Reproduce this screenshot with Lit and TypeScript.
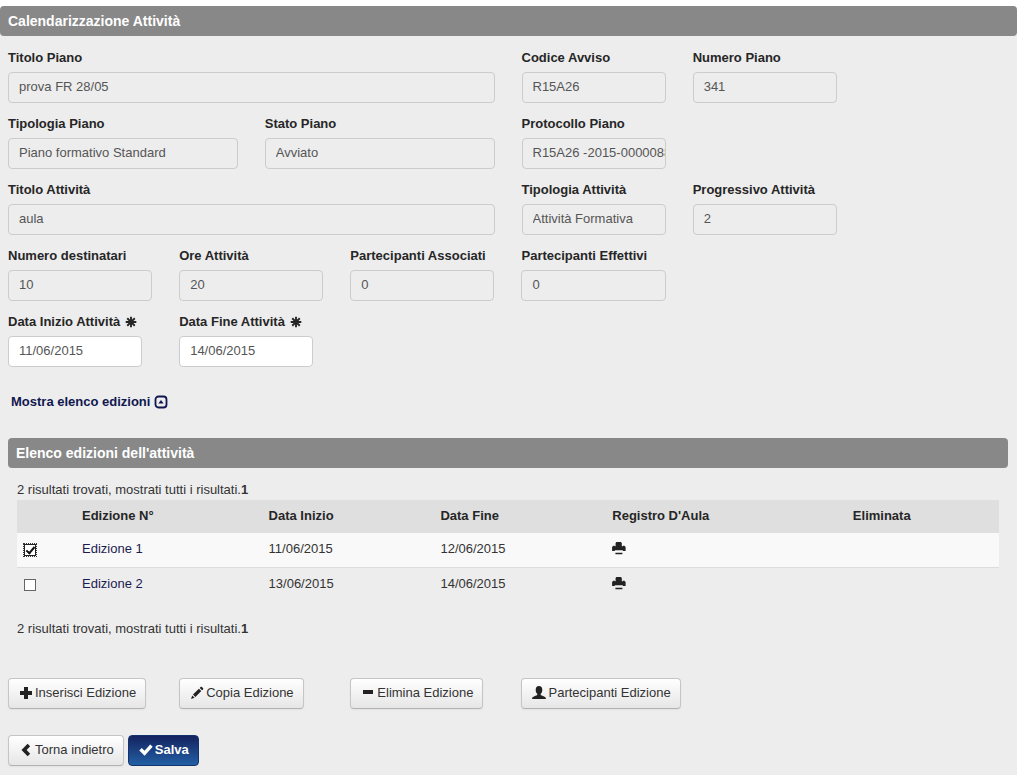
import { LitElement, html, css, svg } from "lit";
import { customElement, property, state } from "lit/decorators.js";
import { classMap } from "lit/directives/class-map.js";

const icons: Record<string, unknown> = {
  plus: svg`<path d="M5 1h4v4h4v4H9v4H5V9H1V5h4z"/>`,
  minus: svg`<path d="M2 4h10v4H2z"/>`,
  pencil: svg`<path d="M1 13l1.200-3.600 2.400 2.400zM3 8.600l5.900-5.900 2.400 2.400L5.400 11zM9.700 1.900l.9-.9c.4-.4.9-.4 1.300 0l1.100 1.100c.4.4.4.9 0 1.300l-.9.9z"/>`,
  user: svg`<path d="M7 0c2.200 0 3.300 1.600 3.300 3.900 0 1.700-.6 3-1.600 3.900v1.100c.9.9 3.900 1.300 4.700 2.300.4.500.5 1.100.5 1.800H.1c0-.7.1-1.300.5-1.800.8-1 3.800-1.400 4.700-2.300V7.800c-1-.9-1.600-2.200-1.600-3.900C3.700 1.600 4.800 0 7 0z"/>`,
  left: svg`<path d="M8.600.8l2.600 2.500L7.600 7l3.600 3.700-2.600 2.500L2.500 7z"/>`,
  ok: svg`<path d="M.3 7.600l2.500-2.500 2.700 2.600 5.700-6.300 2.500 2.400-8.100 8.900z"/>`,
  print: svg`<path d="M4.300 0h4.600l.9 1v3.300h1.100v-.6h1.500l1.200 1.300v4h-2.700V8.200H2.800V9H.1V5l1.200-1.300h1.500v.6h.8V1zM3.400 10.700h7v1.600h-7z"/>`,
  asterisk: svg`<g fill="none" stroke="currentColor" stroke-width="2.200"><path d="M7 .8v12.400M.8 7h12.400M2.600 2.600l8.800 8.800M11.400 2.600l-8.800 8.800"/></g>`,
  expand: svg`<rect x="1.500" y="1.500" width="11" height="11" rx="3" fill="none" stroke="currentColor" stroke-width="1.800"/><path d="M7 5l2.600 3.500H4.400z"/>`,
};

const icon = (name: string) =>
  html`<svg class="icon" viewBox="0 0 14 14" aria-hidden="true">${icons[name]}</svg>`;

@customElement("form-field")
class FormField extends LitElement {
  @property() label = "";
  @property() value = "";
  @property({ type: Boolean }) required = false;

  static styles = css`
    :host { display: block; min-width: 0; }
    label { display: flex; align-items: center; gap: 5px; height: 20px; margin-bottom: 4px; font-weight: bold; color: #262626; white-space: nowrap; }
    .icon { width: 12px; height: 12px; fill: currentColor; }
    input { display: block; box-sizing: border-box; width: 100%; height: 31px; padding: 0 0 2px 10px; border: 1px solid #ccc; border-radius: 4px; background: #ededed; font: inherit; color: #555; }
    .date { width: calc(100% - 10px); background: #fff; }
    input:focus { outline: none; border-color: #6ea5d8; }
  `;

  render() {
    return html`
      <label for="field">${this.label}${this.required ? icon("asterisk") : ""}</label>
      <input id="field" type="text" class=${classMap({ date: this.required })}
        .value=${this.value} ?readonly=${!this.required} ?required=${this.required}>
    `;
  }
}

interface Field { label: string; value: string; span: string; required?: boolean; }

const fieldRows: Field[][] = [
  [
    { label: "Titolo Piano", value: "prova FR 28/05", span: "span6" },
    { label: "Codice Avviso", value: "R15A26", span: "span2" },
    { label: "Numero Piano", value: "341", span: "span2" },
  ],
  [
    { label: "Tipologia Piano", value: "Piano formativo Standard", span: "span3" },
    { label: "Stato Piano", value: "Avviato", span: "span3" },
    { label: "Protocollo Piano", value: "R15A26 -2015-0000088", span: "span2" },
  ],
  [
    { label: "Titolo Attività", value: "aula", span: "span6" },
    { label: "Tipologia Attività", value: "Attività Formativa", span: "span2" },
    { label: "Progressivo Attività", value: "2", span: "span2" },
  ],
  [
    { label: "Numero destinatari", value: "10", span: "span2" },
    { label: "Ore Attività", value: "20", span: "span2" },
    { label: "Partecipanti Associati", value: "0", span: "span2" },
    { label: "Partecipanti Effettivi", value: "0", span: "span2" },
  ],
  [
    { label: "Data Inizio Attività", value: "11/06/2015", span: "span2", required: true },
    { label: "Data Fine Attività", value: "14/06/2015", span: "span2", required: true },
  ],
];

const actions = [
  { icon: "plus", text: "Inserisci Edizione" },
  { icon: "pencil", text: "Copia Edizione" },
  { icon: "minus", text: "Elimina Edizione" },
  { icon: "user", text: "Partecipanti Edizione" },
];

@customElement("app-root")
class AppRoot extends LitElement {
  @state() private editions = [
    { name: "Edizione 1", start: "11/06/2015", end: "12/06/2015", selected: true },
    { name: "Edizione 2", start: "13/06/2015", end: "14/06/2015", selected: false },
  ];

  static styles = css`
    :host { display: flex; flex-direction: column; box-sizing: border-box; min-height: 100vh; padding: 6px 7px 0 0; background: #fff; font: 13px/20px "Liberation Sans", Arial, sans-serif; color: #333; }
    main { flex: 1; background: #ededed; border-radius: 4px 4px 0 0; }
    h1, h2 { margin: 0; height: 30px; line-height: 30px; font-size: 14px; font-weight: bold; color: #fff; background: #888; border-radius: 4px; padding: 0 8px; }
    .content { padding: 12px 9px 9px 8px; }
    .row { display: grid; grid-template-columns: repeat(12, minmax(0, 1fr)); column-gap: 27px; }
    .fields { display: grid; row-gap: 11px; }
    .span2 { grid-column: span 2; }
    .span3 { grid-column: span 3; }
    .span6 { grid-column: span 6; }
    .icon { width: 14px; height: 14px; flex: none; fill: currentColor; }
    .toggle { display: flex; width: max-content; align-items: center; gap: 4px; margin: 25px 0 26px 3px; font-weight: bold; color: #10174f; text-decoration: none; }
    .editions { padding: 12px 9px 0; }
    .summary { margin: 0; }
    .summary.bottom { margin-top: 16px; }
    table { width: 100%; table-layout: fixed; border-collapse: separate; border-spacing: 0; }
    th, td { box-sizing: border-box; padding: 0 8px; text-align: left; vertical-align: middle; }
    th { height: 33px; padding-bottom: 2px; background: #dfdfdf; color: #262626; }
    td { height: 35px; padding-bottom: 3px; }
    tbody tr:first-child td { background: #f9f9f9; border-bottom: 1px solid #ddd; }
    .check { width: 57px; }
    .name { width: 19%; }
    .date { width: 17.5%; }
    .reg { width: 24.5%; }
    td a { color: #1b1b50; text-decoration: none; }
    .print { display: flex; width: max-content; padding: 0; border: 0; background: none; color: #222; cursor: pointer; }
    input[type="checkbox"] { appearance: none; display: block; box-sizing: border-box; width: 12px; height: 12px; margin: 2px 0 0; border: 1px solid #666; background: #fff; }
    input[type="checkbox"]:checked { border-color: #222; outline: 1px dotted #333; }
    input[type="checkbox"]:checked::before { content: ""; display: block; box-sizing: border-box; width: 5px; height: 9px; margin: 0 auto; border: solid #111; border-width: 0 2px 2px 0; transform: rotate(40deg); }
    td.pick { padding-left: 7px; }
    .actions { margin-top: 39px; }
    .footer { display: flex; gap: 4px; margin-top: 26px; }
    .btn { display: inline-flex; align-items: center; justify-content: center; gap: 2px; box-sizing: border-box; height: 31px; padding: 0 9px 1px 10px; font: inherit; color: #333; white-space: nowrap; border: 1px solid #c5c5c5; border-bottom-color: #b3b3b3; border-radius: 4px; background: linear-gradient(#fff, #e6e6e6); box-shadow: inset 0 1px 0 #fff, 0 1px 2px rgba(0, 0, 0, 0.05); cursor: pointer; }
    .btn .icon { color: #222; }
    .btn.primary { font-weight: bold; color: #fff; border-color: #14336c; background: linear-gradient(#14235f, #235fa4); box-shadow: none; }
    .btn.primary .icon { color: #fff; }
  `;

  private toggle(index: number) {
    this.editions = this.editions.map((e, i) => (i === index ? { ...e, selected: !e.selected } : e));
  }

  render() {
    return html`
      <main>
        <h1>Calendarizzazione Attività</h1>
        <div class="content">
          <div class="fields">
            ${fieldRows.map((row) => html`<div class="row">
              ${row.map((f) => html`<form-field class=${f.span} .label=${f.label} .value=${f.value} .required=${!!f.required}></form-field>`)}
            </div>`)}
          </div>
          <a class="toggle" href="#elenco">Mostra elenco edizioni ${icon("expand")}</a>
          <section id="elenco">
            <h2>Elenco edizioni dell'attività</h2>
            <div class="editions">
              <p class="summary">2 risultati trovati, mostrati tutti i risultati.<strong>1</strong></p>
              <table>
                <thead>
                  <tr>
                    <th class="check"></th>
                    <th class="name">Edizione N°</th>
                    <th class="date">Data Inizio</th>
                    <th class="date">Data Fine</th>
                    <th class="reg">Registro D'Aula</th>
                    <th>Eliminata</th>
                  </tr>
                </thead>
                <tbody>
                  ${this.editions.map((e, i) => html`<tr>
                    <td class="pick"><input type="checkbox" aria-label=${e.name} .checked=${e.selected} @change=${() => this.toggle(i)}></td>
                    <td><a href="#elenco">${e.name}</a></td>
                    <td>${e.start}</td>
                    <td>${e.end}</td>
                    <td><button class="print" type="button" aria-label="Registro D'Aula">${icon("print")}</button></td>
                    <td></td>
                  </tr>`)}
                </tbody>
              </table>
              <p class="summary bottom">2 risultati trovati, mostrati tutti i risultati.<strong>1</strong></p>
            </div>
          </section>
          <div class="row actions">
            ${actions.map((a) => html`<div class="span2"><button class="btn" type="button">${icon(a.icon)}${a.text}</button></div>`)}
          </div>
          <div class="footer">
            <button class="btn" type="button">${icon("left")}Torna indietro</button>
            <button class="btn primary" type="submit">${icon("ok")}Salva</button>
          </div>
        </div>
      </main>
    `;
  }
}
